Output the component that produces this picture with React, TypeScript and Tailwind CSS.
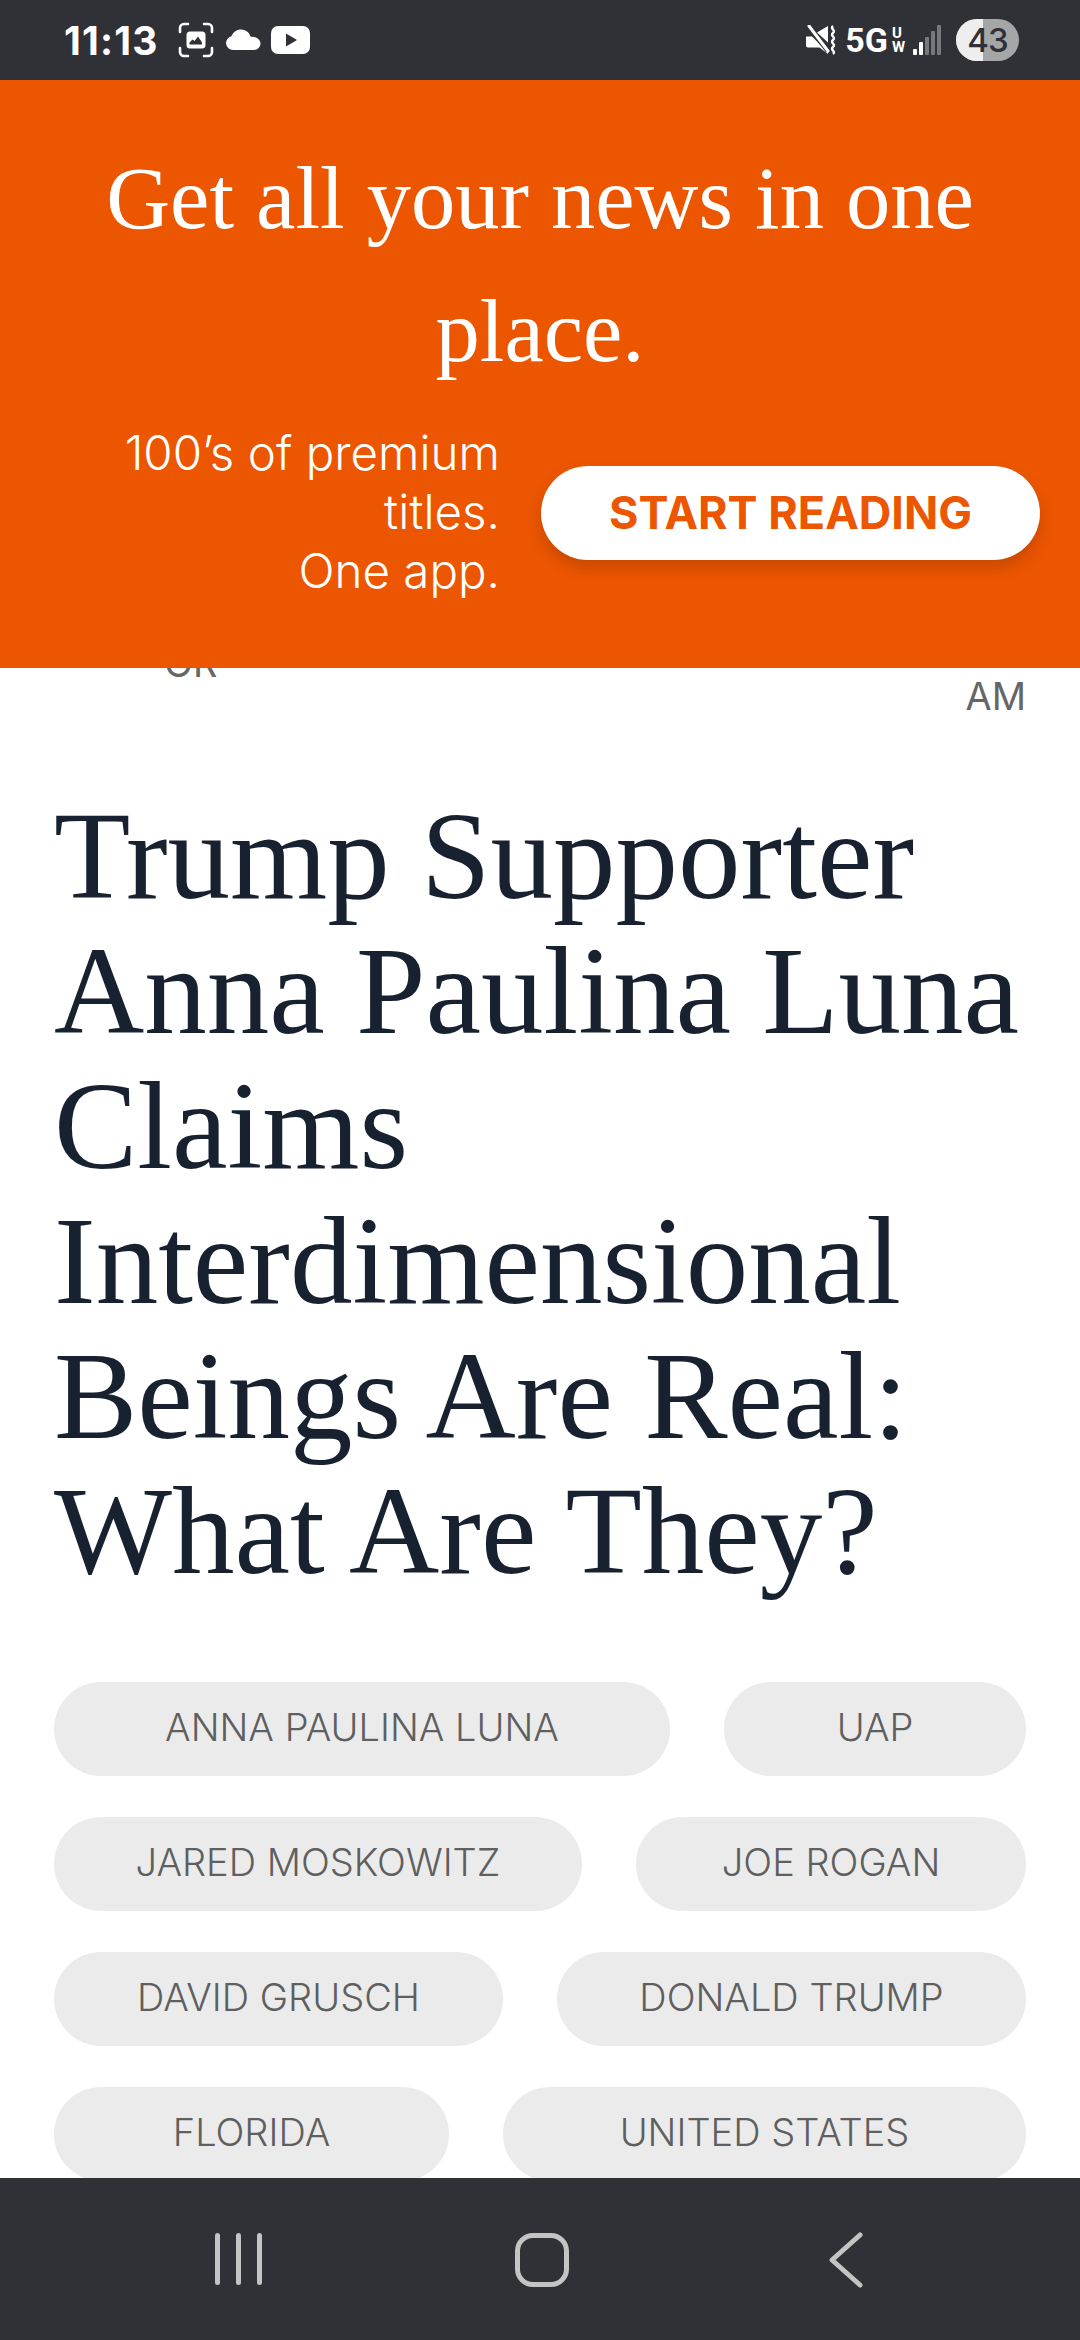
import React from "react";

const serif = "font-['Liberation_Serif',serif]";
const sans = "font-['Inter',sans-serif]";

function ScreenshotIcon() {
  return (
    <svg width="36" height="36" viewBox="0 0 36 36" fill="none" className="ml-[19px]">
      <path d="M2 10V6a4 4 0 0 1 4-4h4M26 2h4a4 4 0 0 1 4 4v4M34 26v4a4 4 0 0 1-4 4h-4M10 34H6a4 4 0 0 1-4-4v-4" stroke="#fff" strokeWidth="2.6" strokeLinecap="round" />
      <rect x="8.500" y="9.500" width="19" height="17" rx="3.500" fill="#fff" />
      <path d="M11.500 22.500v-2l3-3 2 1.500 3.500-4.500 4 6v2z" fill="#303136" />
    </svg>
  );
}

function CloudIcon() {
  return (
    <svg width="36" height="22" viewBox="0 0 36 22" className="ml-[11px]">
      <path d="M8 21a7 7 0 0 1-1.600-13.800C8 3 12 0.500 16 0.500c4.600 0 8.400 3 9.600 7.300 0.400-.1.800-.1 1.400-.1 4.600 0 8.500 2.800 8.500 6.800 0 3.700-3 6.500-7 6.500z" fill="#fff" />
    </svg>
  );
}

function YoutubeIcon() {
  return (
    <svg width="39" height="28" viewBox="0 0 39 28" className="ml-[10px]">
      <rect width="39" height="28" rx="7" fill="#fff" />
      <path d="M15 7.500l11 6.500-11 6.500z" fill="#303136" />
    </svg>
  );
}

function MuteIcon() {
  return (
    <svg width="30" height="30" viewBox="0 0 30 30">
      <path d="M0 11.500h6l16 16v1.500l-8.500-6.500H2a2 2 0 0 1-2-2zM11 7.500l11-6.500v16.500z" fill="#fff" />
      <path d="M3 2l19 24" stroke="#303136" strokeWidth="5" />
      <path d="M3 1l19 25" stroke="#fff" strokeWidth="3" strokeLinecap="round" />
      <path d="M27 1c-3.500 3 3.500 4 0 7s3.500 4 0 7 3.500 4 0 7 3.500 4 0 7" stroke="#fff" strokeWidth="2.400" fill="none" />
    </svg>
  );
}

function SignalIcon() {
  return (
    <svg width="28" height="30" viewBox="0 0 28 30" className="ml-[8px]">
      <rect x="0" y="24" width="4" height="6" rx="1" fill="#fff" />
      <rect x="6" y="17" width="4" height="13" rx="1" fill="#fff" />
      <rect x="12" y="12" width="4" height="18" rx="1" fill="#77787b" />
      <rect x="18" y="6" width="4" height="24" rx="1" fill="#77787b" />
      <rect x="24" y="0" width="4" height="30" rx="1" fill="#77787b" />
    </svg>
  );
}

function Battery() {
  return (
    <div className="relative ml-[15px] flex h-[42px] w-[63px] items-center justify-center overflow-hidden rounded-[21px] bg-[#a5a6a8]">
      <div className="absolute inset-y-0 left-0 w-[27px] bg-[#eeeeef]" />
      <span className={`relative text-[33px] font-medium leading-none tracking-[-1px] text-[#303136] ${sans}`}>43</span>
    </div>
  );
}

function StatusBar() {
  return (
    <div className="flex h-[80px] shrink-0 items-center justify-between bg-[#303136] pl-[64px] pr-[61px]">
      <div className="flex items-center">
        <span className={`text-[39px] font-bold leading-none tracking-[1.200px] text-white ${sans}`}>11:13</span>
        <ScreenshotIcon />
        <CloudIcon />
        <YoutubeIcon />
      </div>
      <div className="flex items-center">
        <MuteIcon />
        <span className="ml-[9px] font-['Roboto',sans-serif] text-[34px] font-bold leading-none text-white">5G</span>
        <span className="ml-[4px] flex flex-col font-['Roboto',sans-serif] text-[15px] font-bold leading-[14px] text-white">
          <span>U</span>
          <span>W</span>
        </span>
        <SignalIcon />
        <Battery />
      </div>
    </div>
  );
}

function Banner() {
  return (
    <div className="flex h-[588px] shrink-0 flex-col items-center bg-[#ed5600] pt-[52px] text-white">
      <h2 className={`w-[900px] text-center text-[88.500px] leading-[133px] ${serif}`}>Get all your news in one place.</h2>
      <div className="mt-[25px] flex w-full items-center pl-[100px] pr-[40px]">
        <p className={`w-[400px] text-right text-[47.500px] font-light leading-[59px] ${sans}`}>
          100’s of premium titles.
          <br />
          One app.
        </p>
        <button className={`ml-[41px] mt-[2px] flex h-[94px] w-[499px] items-center justify-center rounded-full bg-white text-[45px] font-bold text-[#ed5600] shadow-[0_8px_16px_rgba(0,0,0,0.16)] ${sans}`}>
          START READING
        </button>
      </div>
    </div>
  );
}

const rows = [
  [["ANNA PAULINA LUNA", "w-[616px]"], ["UAP", "w-[302px]"]],
  [["JARED MOSKOWITZ", "w-[528px]"], ["JOE ROGAN", "w-[390px]"]],
  [["DAVID GRUSCH", "w-[449px]"], ["DONALD TRUMP", "w-[469px]"]],
  [["FLORIDA", "w-[395px]"], ["UNITED STATES", "w-[523px]"]],
];

function Article() {
  return (
    <div className="min-h-0 flex-1 overflow-hidden bg-white px-[54px] text-[#666666]">
      <div className={`flex h-[56px] justify-between text-[38px] leading-[46px] ${sans}`}>
        <span className="ml-[110px] mt-[-28px]">OR</span>
        <span className="mt-[5px]">AM</span>
      </div>
      <h1 className={`mt-[65px] text-[125px] leading-[135px] text-[#17212f] ${serif}`}>
        Trump Supporter Anna Paulina Luna Claims Interdimensional Beings Are Real: What Are They?
      </h1>
      <div className={`mt-[83px] flex flex-col gap-[41px] ${sans}`}>
        {rows.map((row, i) => (
          <div key={i} className="flex justify-between">
            {row.map(([label, width]) => (
              <span key={label} className={`flex h-[94px] items-center justify-center rounded-full bg-[#ebebeb] pb-[3px] text-[38px] font-light text-[#5f5f5f] ${width}`}>
                {label}
              </span>
            ))}
          </div>
        ))}
      </div>
    </div>
  );
}

function NavBar() {
  return (
    <div className="relative flex h-[162px] shrink-0 items-start bg-[#303136] pt-[55px]">
      <div className="ml-[215px] flex h-[52px] gap-[16px]">
        <span className="w-[5px] rounded-full bg-[#c4c4c5]" />
        <span className="w-[5px] rounded-full bg-[#c4c4c5]" />
        <span className="w-[5px] rounded-full bg-[#c4c4c5]" />
      </div>
      <div className="ml-[253px] h-[54px] w-[54px] rounded-[18px] border-[5px] border-[#c4c4c5]" />
      <svg width="38" height="56" viewBox="0 0 38 56" className="ml-[257px] mt-[-1px]" fill="none">
        <path d="M34 3L6 28l28 25" stroke="#c4c4c5" strokeWidth="5" strokeLinecap="round" strokeLinejoin="round" />
      </svg>
    </div>
  );
}

export default function App() {
  return (
    <div className="flex h-[2340px] w-[1080px] flex-col overflow-hidden bg-white">
      <StatusBar />
      <Banner />
      <Article />
      <NavBar />
    </div>
  );
}
